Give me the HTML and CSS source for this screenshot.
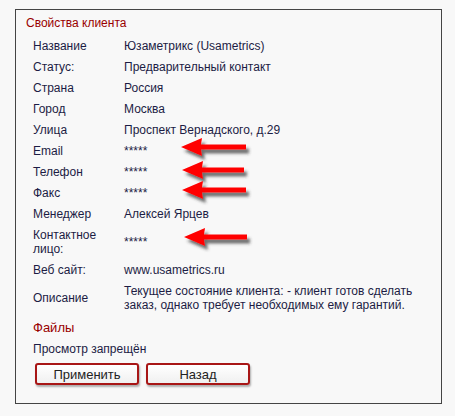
FILE: index.html
```html
<!DOCTYPE html>
<html lang="ru">
<head>
<meta charset="utf-8">
<link rel="stylesheet" href="styles.css">
</head>
<body>
<div class="card">
  <div class="title">Свойства клиента</div>
  <div class="props">
    <div class="lbl">Название</div><div class="val">Юзаметрикс (Usametrics)</div>
    <div class="lbl">Статус:</div><div class="val">Предварительный контакт</div>
    <div class="lbl">Страна</div><div class="val">Россия</div>
    <div class="lbl">Город</div><div class="val">Москва</div>
    <div class="lbl">Улица</div><div class="val">Проспект Вернадского, д.29</div>
    <div class="lbl">Email</div><div class="val mid">*****</div>
    <div class="lbl">Телефон</div><div class="val mid">*****</div>
    <div class="lbl">Факс</div><div class="val mid">*****</div>
    <div class="lbl">Менеджер</div><div class="val">Алексей Ярцев</div>
    <div class="lbl">Контактное<br>лицо:</div><div class="val mid">*****</div>
    <div class="lbl">Веб сайт:</div><div class="val">www.usametrics.ru</div>
    <div class="lbl mid">Описание</div><div class="val">Текущее состояние клиента: - клиент готов сделать заказ, однако требует необходимых ему гарантий.</div>
  </div>
  <div class="section">Файлы</div>
  <div class="note">Просмотр запрещён</div>
  <div class="buttons">
    <button class="btn">Применить</button>
    <button class="btn">Назад</button>
  </div>
  <svg class="arrows" width="427" height="395" viewBox="0 0 427 395">
    <defs>
      <filter id="sh" x="-20%" y="-60%" width="150%" height="240%">
        <feDropShadow dx="3" dy="4" stdDeviation="1.8" flood-color="#333" flood-opacity="0.7"/>
      </filter>
    </defs>
    <g transform="translate(-16,-10)" fill="#ff0000" filter="url(#sh)">
      <path d="M181,147 L202,138 L201,144.5 L246,144.5 L246,149.5 L201,149.5 L202,156 Z"/>
      <path d="M182,170 L203,161 L202,167.5 L244,167.5 L244,172.5 L202,172.5 L203,179 Z"/>
      <path d="M182,190 L203,181 L202,187.5 L246,187.5 L246,192.5 L202,192.5 L203,199 Z"/>
      <path d="M184,237 L205,228 L204,234.5 L247,234.5 L247,239.5 L204,239.5 L205,246 Z"/>
    </g>
  </svg>
</div>
</body>
</html>
```
FILE: styles.css
```css
html, body {
  margin: 0;
  padding: 0;
  background: #f8f8f8;
}
body {
  font-family: "Liberation Sans", Arial, sans-serif;
  font-size: 12px;
  color: #1c1c44;
}
.card {
  position: relative;
  box-sizing: border-box;
  width: 427px;
  height: 395px;
  margin: 9px 0 0 15px;
  border: 1px solid #444;
  background: #f8f8f8;
  padding: 5px 10px 0 10px;
}
.title {
  line-height: 16px;
  color: #990000;
}
.props {
  display: grid;
  grid-template-columns: 91px 1fr;
  margin-top: 4px;
  padding-left: 7px;
}
.lbl, .val {
  line-height: 14px;
  padding: 3.5px 0;
}
.mid {
  align-self: center;
}
.val {
  padding-right: 8px;
}
.section {
  margin-top: 2px;
  padding: 3.5px 0 3.5px 7px;
  line-height: 14px;
  font-size: 13px;
  color: #990000;
}
.note {
  padding: 3.5px 0 3.5px 7px;
  line-height: 14px;
}
.buttons {
  display: flex;
  gap: 7px;
  margin: 4px 0 0 9px;
}
.btn {
  box-sizing: border-box;
  width: 104px;
  height: 22px;
  padding: 0;
  border: 2px solid #a81616;
  border-radius: 3px;
  background: linear-gradient(#ffffff, #f0f0f0);
  box-shadow: 1px 2px 2px rgba(0, 0, 0, 0.3);
  font-family: "Liberation Sans", Arial, sans-serif;
  font-size: 13px;
  color: #222;
}
.arrows {
  position: absolute;
  left: 0;
  top: 0;
  overflow: visible;
  pointer-events: none;
}
```
